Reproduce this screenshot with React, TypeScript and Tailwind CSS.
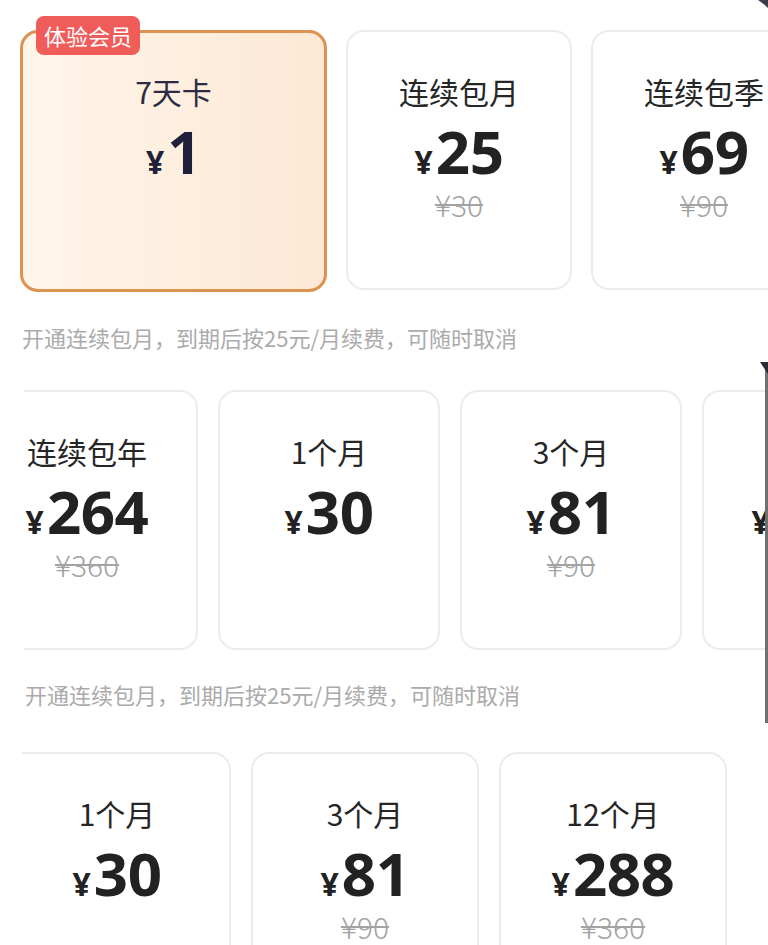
import React from "react";

type Plan = { title: string; price: string; old?: string };

const FONT = "font-['Noto_Sans','Noto_Sans_CJK_SC',sans-serif]";
const CJK = "font-['Noto_Sans_CJK_SC','Noto_Sans',sans-serif]";

function Price({ price, color }: { price: string; color: string }) {
  return (
    <div className={`${FONT} mt-[12px] flex items-baseline ${color} h-[60px] leading-[60px]`}>
      <span className="text-[32px] leading-none font-bold mr-[3px]">¥</span>
      <span className="text-[60px] font-bold tracking-[-0.5px]">{price}</span>
    </div>
  );
}

function Card({ plan, w }: { plan: Plan; w: string }) {
  return (
    <div
      className={`${w} h-[260px] shrink-0 rounded-[18px] border-2 border-[#ececec] bg-white flex flex-col items-center pt-[41px]`}
    >
      <div className={`${CJK} text-[30px] leading-[36px] text-[#262626]`}>{plan.title}</div>
      <Price price={plan.price} color="text-[#222]" />
      {plan.old && (
        <div className={`${CJK} mt-[8px] text-[30px] leading-[30px] font-light text-[#a3a3a3] line-through decoration-[1.5px]`}>
          ¥{plan.old}
        </div>
      )}
    </div>
  );
}

function Note({ ml }: { ml: string }) {
  return (
    <div className={`${CJK} ${ml} text-[22px] leading-[28px] text-[#ababab]`}>
      开通连续包月，到期后按25元/月续费，可随时取消
    </div>
  );
}

export default function App() {
  return (
    <div className="relative w-[768px] h-[945px] overflow-hidden bg-white">
      {/* Row 1 */}
      <div className="pt-[30px] pl-[20px]">
        <div className="flex gap-[19px]">
          <div className="relative w-[307px] h-[262px] shrink-0 rounded-[18px] border-[3px] border-[#dc9350] bg-gradient-to-r from-[#fff6ea] to-[#fde8d5] flex flex-col items-center pt-[40px]">
            <div className={`${CJK} absolute -top-[17px] left-[13px] h-[39px] px-[8px] rounded-[8px] bg-[#f05c5a] text-white text-[22px] leading-[39px]`}>
              体验会员
            </div>
            <div className={`${CJK} text-[30px] leading-[36px] text-[#2b2b45]`}>7天卡</div>
            <Price price="1" color="text-[#20203a]" />
          </div>
          <Card plan={{ title: "连续包月", price: "25", old: "30" }} w="w-[226px]" />
          <Card plan={{ title: "连续包季", price: "69", old: "90" }} w="w-[226px]" />
        </div>
      </div>
      <div className="mt-[31px]">
        <Note ml="ml-[22px]" />
      </div>

      {/* Row 2 */}
      <div className="mt-[39px] ml-[24px] overflow-hidden">
        <div className="flex gap-[20px] -ml-[48px]">
          <Card plan={{ title: "连续包年", price: "264", old: "360" }} w="w-[222px]" />
          <Card plan={{ title: "1个月", price: "30" }} w="w-[222px]" />
          <Card plan={{ title: "3个月", price: "81", old: "90" }} w="w-[222px]" />
          <Card plan={{ title: "12个月", price: "288", old: "360" }} w="w-[222px]" />
        </div>
      </div>
      <div className="mt-[30px]">
        <Note ml="ml-[25px]" />
      </div>

      {/* Row 3 */}
      <div className="mt-[44px] ml-[22px] overflow-hidden">
        <div className="flex gap-[20px] -ml-[19px]">
          <Card plan={{ title: "1个月", price: "30" }} w="w-[228px]" />
          <Card plan={{ title: "3个月", price: "81", old: "90" }} w="w-[228px]" />
          <Card plan={{ title: "12个月", price: "288", old: "360" }} w="w-[228px]" />
        </div>
      </div>

      {/* edge artifacts */}
      <div className="absolute right-0 top-[365px] w-[3px] h-[358px] bg-[#707070]" />
      <svg className="absolute right-0 top-[362px]" width="8" height="12" viewBox="0 0 8 12">
        <path d="M0 0 L8 0 L8 12 Z" fill="#2a2a3a" />
      </svg>
      <svg className="absolute right-0 top-0" width="10" height="8" viewBox="0 0 10 8">
        <path d="M0 0 Q6 4 10 8 L10 0 Z" fill="#3a3a4a" />
      </svg>
    </div>
  );
}
